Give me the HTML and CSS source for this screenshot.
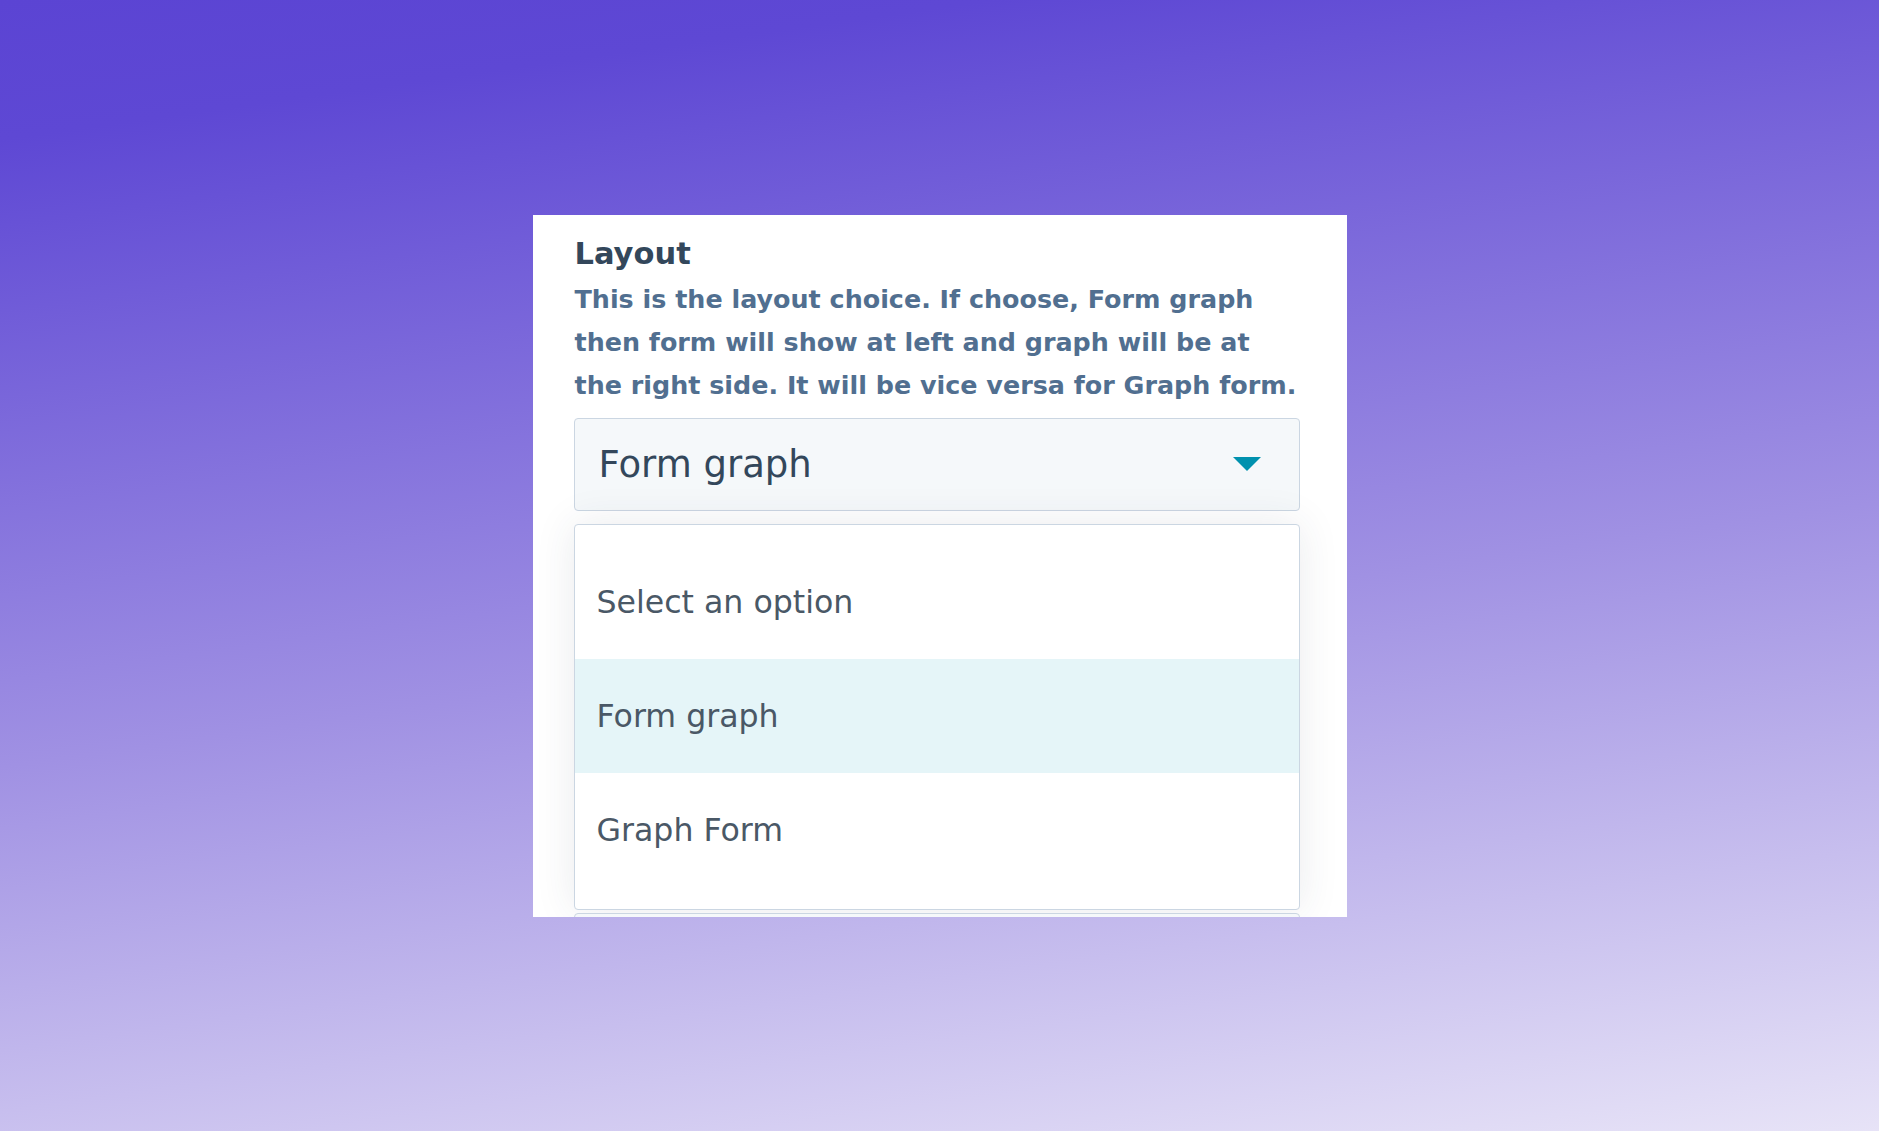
FILE: index.html
```html
<!DOCTYPE html>
<html lang="en">
<head>
<meta charset="utf-8">
<title>Layout field</title>
<link rel="stylesheet" href="styles.css">
</head>
<body>
<main class="card">
  <div class="field">
    <label class="field-label">Layout</label>
    <p class="field-help">This is the layout choice. If choose, Form graph then form will show at left and graph will be at the right side. It will be vice versa for Graph form.</p>
    <div class="select">
      <span class="select-value">Form graph</span>
      <svg class="select-caret" width="28" height="14" viewBox="0 0 28 14" aria-hidden="true"><path d="M0 0 H28 L14 14 Z" fill="#0091ae"/></svg>
    </div>
    <ul class="options">
      <li class="option">Select an option</li>
      <li class="option option-active">Form graph</li>
      <li class="option">Graph Form</li>
    </ul>
    <div class="next-field"></div>
  </div>
</main>
</body>
</html>
```
FILE: styles.css
```css
html, body {
  margin: 0;
  padding: 0;
}

body {
  height: 100vh;
  display: flex;
  align-items: center;
  justify-content: center;
  font-family: "DejaVu Sans", Inter, sans-serif;
  background: linear-gradient(172deg, #5b44d3 0%, #5e48d4 10%, #a091e3 55%, #e7e3f7 100%);
}

.card {
  width: 814px;
  height: 702px;
  box-sizing: border-box;
  background: #ffffff;
  padding: 18px 47px 0 42px;
  overflow: hidden;
}

.field {
  display: flex;
  flex-direction: column;
}

.field-label {
  font-size: 30.5px;
  line-height: 42px;
  font-weight: 700;
  color: #33475b;
}

.field-help {
  margin: 3px 0 0;
  font-size: 25.4px;
  line-height: 43px;
  font-weight: 700;
  color: #516f90;
}

.select {
  margin-top: 11px;
  margin-left: -1px;
  height: 93px;
  box-sizing: border-box;
  border: 1px solid #cbd6e2;
  border-radius: 4px;
  background: #f5f8fa;
  display: flex;
  align-items: center;
  justify-content: space-between;
  padding: 0 38px 0 24px;
}

.select-value {
  font-size: 37px;
  color: #33475b;
}

.select-caret {
  display: block;
}

.options {
  list-style: none;
  margin: 13px 0 0 -1px;
  padding: 20px 0 22px;
  border: 1px solid #cbd6e2;
  border-radius: 4px;
  background: #ffffff;
  box-shadow: 0 0 40px rgba(45, 62, 80, 0.10);
}

.option {
  height: 114px;
  display: flex;
  align-items: center;
  padding-left: 22px;
  font-size: 31.6px;
  color: #4a5866;
}

.option-active {
  background: #e5f5f8;
}

.next-field {
  margin-top: 3px;
  margin-left: -1px;
  height: 80px;
  border: 1px solid #cbd6e2;
  border-radius: 4px;
  background: #f5f8fa;
}
```
